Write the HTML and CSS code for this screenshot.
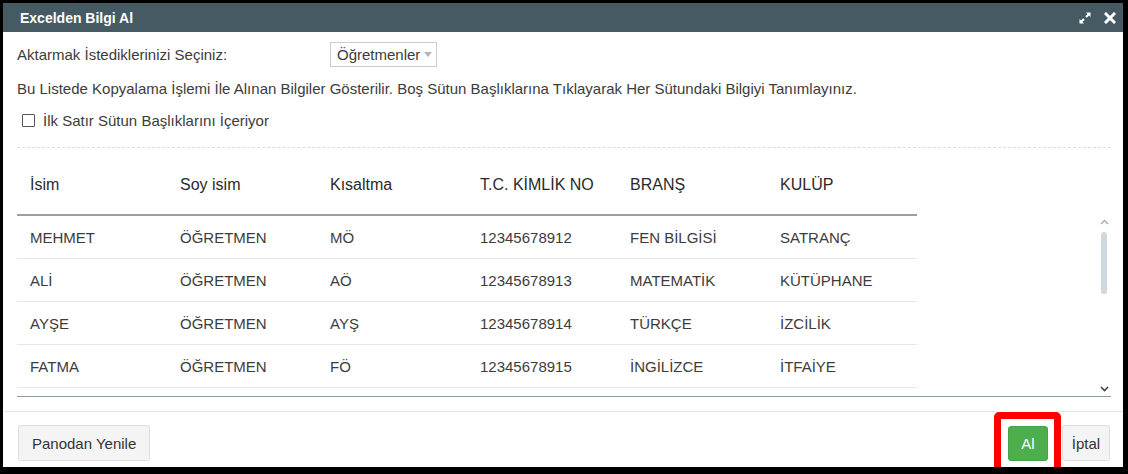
FILE: index.html
```html
<!DOCTYPE html>
<html lang="tr">
<head>
  <meta charset="UTF-8">
  <meta name="viewport" content="width=device-width, initial-scale=1.0">
  <title>Excelden Bilgi Al</title>
  <link rel="stylesheet" href="styles.css">
</head>
<body>
  <div class="dialog">
    <div class="dialog-head">
      <span class="title">Excelden Bilgi Al</span>
      <span class="head-tools">
        <svg class="tool" width="12" height="12" viewBox="0 0 12 12">
          <path d="M7 0.5h4.5V5L10 3.5 7.8 5.7 6.3 4.2 8.5 2z" fill="#fff"/>
          <path d="M5 11.5H0.5V7L2 8.5 4.2 6.3 5.7 7.8 3.5 10z" fill="#fff"/>
        </svg>
        <svg class="tool" width="12" height="12" viewBox="0 0 12 12">
          <path d="M2 2L10 10M10 2L2 10" stroke="#fff" stroke-width="3" stroke-linecap="square"/>
        </svg>
      </span>
    </div>

    <div class="dialog-body">
      <div class="pick-row">
        <label class="pick-label">Aktarmak İstediklerinizi Seçiniz:</label>
        <div class="select">
          <span>Öğretmenler</span>
          <span class="caret"></span>
        </div>
      </div>

      <p class="info">Bu Listede Kopyalama İşlemi İle Alınan Bilgiler Gösterilir. Boş Sütun Başlıklarına Tıklayarak Her Sütundaki Bilgiyi Tanımlayınız.</p>

      <div class="check-row">
        <span class="checkbox"></span>
        <span>İlk Satır Sütun Başlıklarını İçeriyor</span>
      </div>

      <div class="grid">
        <div class="grid-head">
          <div>İsim</div>
          <div>Soy isim</div>
          <div>Kısaltma</div>
          <div>T.C. KİMLİK NO</div>
          <div>BRANŞ</div>
          <div>KULÜP</div>
        </div>
        <div class="grid-body">
          <div class="rows">
            <div class="row">
              <div>MEHMET</div><div>ÖĞRETMEN</div><div>MÖ</div><div>12345678912</div><div>FEN BİLGİSİ</div><div>SATRANÇ</div>
            </div>
            <div class="row">
              <div>ALİ</div><div>ÖĞRETMEN</div><div>AÖ</div><div>12345678913</div><div>MATEMATİK</div><div>KÜTÜPHANE</div>
            </div>
            <div class="row">
              <div>AYŞE</div><div>ÖĞRETMEN</div><div>AYŞ</div><div>12345678914</div><div>TÜRKÇE</div><div>İZCİLİK</div>
            </div>
            <div class="row">
              <div>FATMA</div><div>ÖĞRETMEN</div><div>FÖ</div><div>12345678915</div><div>İNGİLİZCE</div><div>İTFAİYE</div>
            </div>
          </div>
          <div class="scrollbar">
            <svg class="arrow up" width="9" height="6" viewBox="0 0 9 6"><path d="M1 5L4.5 1.5 8 5" fill="none" stroke="#a3acb1" stroke-width="1.4"/></svg>
            <div class="thumb"></div>
            <svg class="arrow down" width="9" height="6" viewBox="0 0 9 6"><path d="M1 1L4.5 4.5 8 1" fill="none" stroke="#444" stroke-width="1.6"/></svg>
          </div>
        </div>
      </div>
    </div>

    <div class="dialog-foot">
      <button class="btn">Panodan Yenile</button>
      <span class="foot-right">
        <span class="marked"><button class="btn btn-green">Al</button></span>
        <button class="btn btn-narrow">İptal</button>
      </span>
    </div>
  </div>
</body>
</html>
```

FILE: styles.css
```css
body {
  margin: 0;
  background-color: #000;
  font-family: "Liberation Sans", Arial, sans-serif;
  color: #3c3c3c;
  font-size: 15px;
}
.dialog {
  margin: 3px 5px 0 3px;
  height: 464px;
  background-color: #fff;
  display: flex;
  flex-direction: column;
}
.dialog-head {
  height: 29px;
  background-color: #465a64;
  color: #fff;
  display: flex;
  align-items: center;
  justify-content: space-between;
  padding: 0 7px 0 17px;
  font-size: 14px;
  font-weight: bold;
}
.head-tools {
  display: flex;
  gap: 13px;
  align-items: center;
}
.tool {
  display: block;
}
.dialog-body {
  padding: 10px 12px 0 14px;
}
.pick-row {
  display: flex;
  align-items: center;
  height: 25px;
}
.pick-label {
  width: 313px;
}
.select {
  box-sizing: border-box;
  width: 107px;
  height: 25px;
  border: 1px solid #ccc;
  display: flex;
  align-items: center;
  justify-content: space-between;
  padding: 0 4px 0 6px;
}
.caret {
  width: 0;
  height: 0;
  border-left: 4px solid transparent;
  border-right: 4px solid transparent;
  border-top: 5px solid #b5b5b5;
}
.info {
  margin: 12px 0 0;
  line-height: 20px;
}
.check-row {
  margin-top: 11px;
  height: 20px;
  display: flex;
  align-items: center;
  gap: 8px;
  padding-left: 5px;
}
.checkbox {
  width: 11px;
  height: 11px;
  border: 1px solid #555;
  border-radius: 1px;
}
.grid {
  margin-top: 17px;
  border-top: 1px dashed #dcdcdc;
  border-bottom: 1px solid #8d9ea8;
}
.grid-head {
  width: 900px;
  display: grid;
  grid-template-columns: repeat(6, 150px);
  height: 66px;
  border-bottom: 2px solid #9a9fa3;
  font-size: 16px;
  color: #2a2a2a;
}
.grid-head div {
  padding: 26px 0 0 13px;
  line-height: 22px;
}
.grid-body {
  height: 180px;
  display: flex;
  overflow: hidden;
}
.rows {
  width: 900px;
}
.row {
  display: grid;
  grid-template-columns: repeat(6, 150px);
  height: 42px;
  border-bottom: 1px solid #e6e6e6;
  align-items: center;
}
.row div {
  padding-left: 13px;
}
.scrollbar {
  margin-left: auto;
  width: 13px;
  position: relative;
}
.arrow {
  position: absolute;
  left: 2px;
}
.arrow.up {
  top: 3px;
}
.arrow.down {
  top: 170px;
}
.thumb {
  position: absolute;
  left: 3px;
  top: 16px;
  width: 6px;
  height: 62px;
  border-radius: 3px;
  background-color: #cfd8dd;
}
.dialog-foot {
  margin-top: 14px;
  border-top: 1px solid #e5e5e5;
  padding: 13px 13px 0 15px;
  display: flex;
  justify-content: space-between;
}
.foot-right {
  display: flex;
  gap: 14px;
}
.btn {
  height: 36px;
  padding: 0 13px;
  font-family: inherit;
  font-size: 15px;
  color: #333;
  background-color: #f4f4f4;
  border: 1px solid #ddd;
  border-radius: 3px;
}
.btn-narrow {
  padding: 0 8px;
  width: 48px;
}
.btn-green {
  width: 40px;
  height: 35px;
  margin-top: 1px;
  padding: 0;
  color: #fff;
  background-color: #4cae4c;
  border-color: #46a346;
}
.marked {
  position: relative;
  display: flex;
}
.marked::after {
  content: "";
  position: absolute;
  top: -13px;
  left: -14px;
  right: -13px;
  bottom: -14px;
  border: 7px solid #f00;
  border-radius: 5px;
  box-shadow: 0 0 0 1px #fff;
}
```
